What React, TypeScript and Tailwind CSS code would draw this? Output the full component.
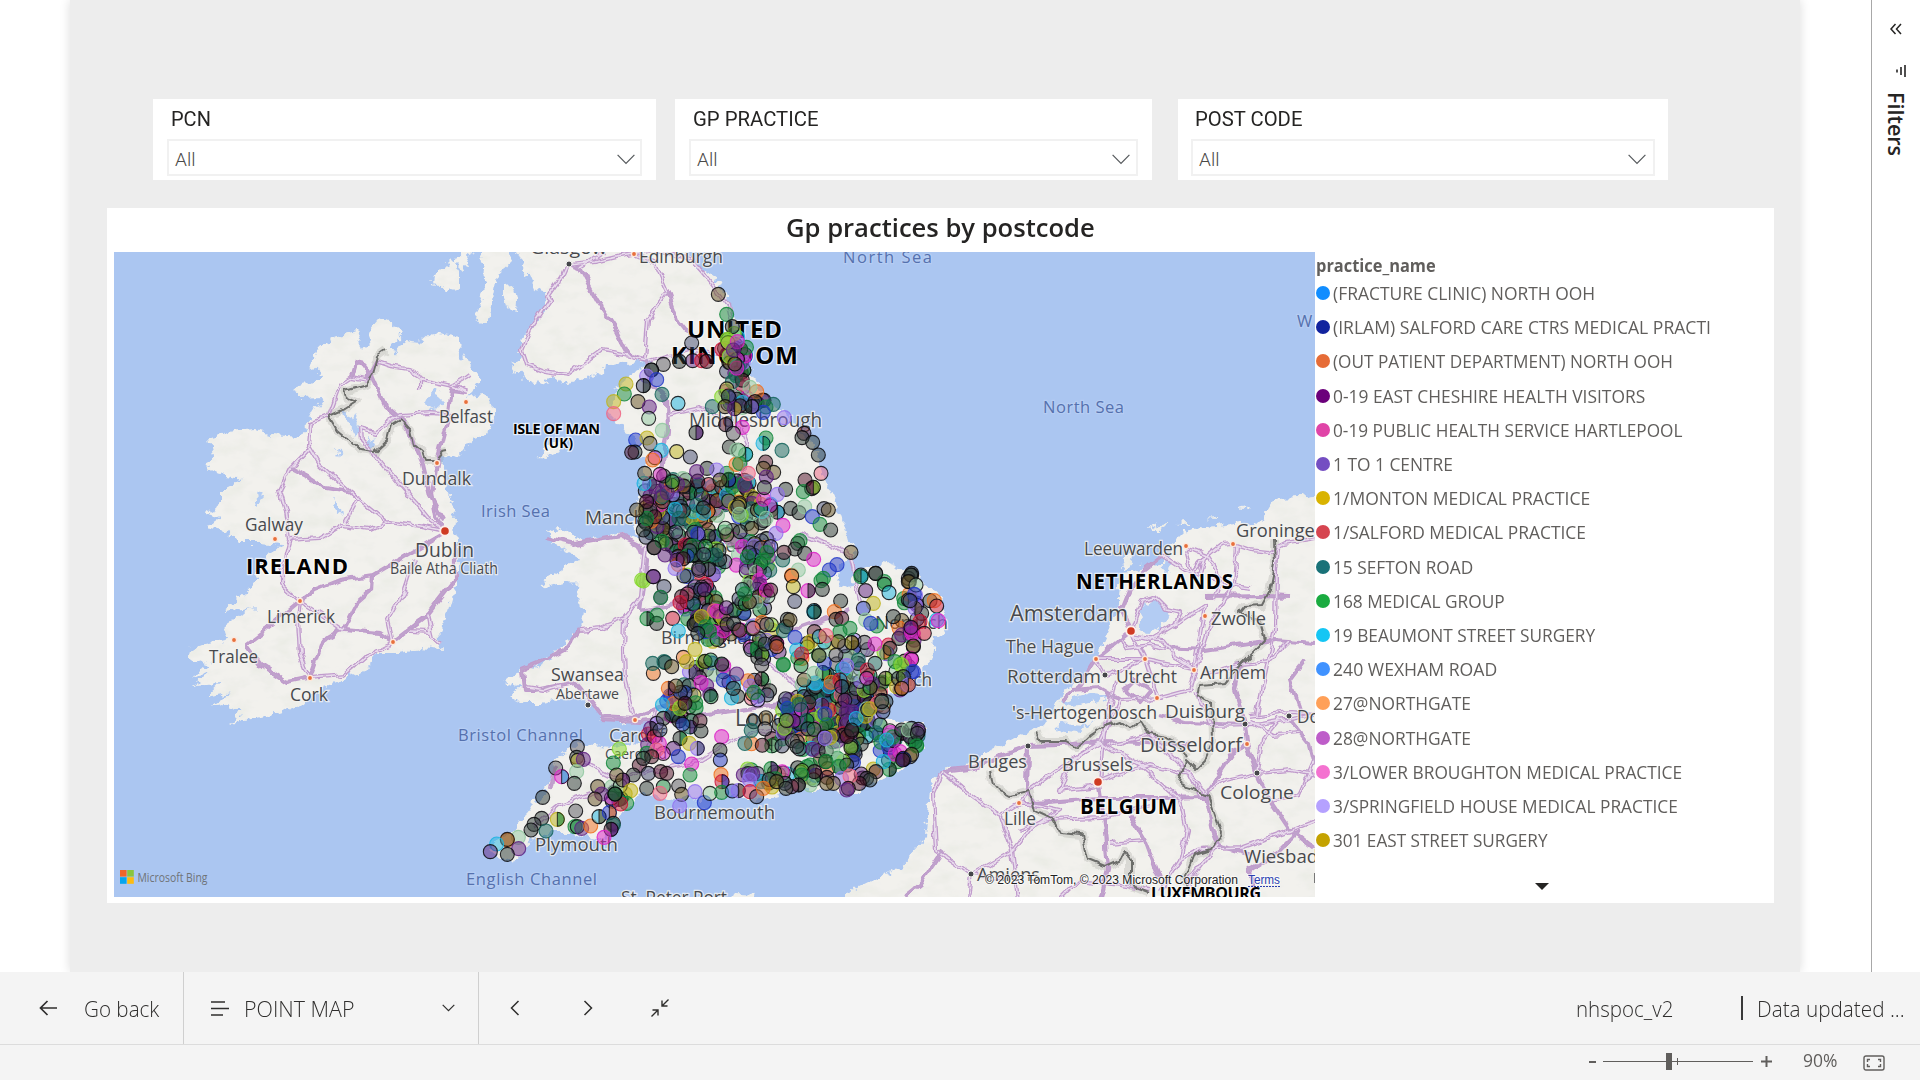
import React, { useLayoutEffect, useRef, useState } from "react";

const UI = "font-['Open_Sans','Noto_Sans',sans-serif]";

/* Text squeezed or stretched horizontally to a given width. */
function Fit({ w, className = "", children }: { w: number; className?: string; children: string }) {
  const ref = useRef<HTMLSpanElement>(null);
  const [scale, setScale] = useState(1);
  useLayoutEffect(() => {
    if (ref.current) setScale(w / ref.current.offsetWidth);
  }, [w, children]);
  return (
    <span className="block shrink-0" style={{ width: w }}>
      <span ref={ref} className={`inline-block origin-left whitespace-nowrap ${className}`} style={{ transform: `scaleX(${scale})` }}>
        {children}
      </span>
    </span>
  );
}

const legend: [string, string, number][] = [
  ["#118DFF", "(FRACTURE CLINIC) NORTH OOH", 262],
  ["#12239E", "(IRLAM) SALFORD CARE CTRS MEDICAL PRACTI", 378],
  ["#E66C37", "(OUT PATIENT DEPARTMENT) NORTH OOH", 340],
  ["#6B007B", "0-19 EAST CHESHIRE HEALTH VISITORS", 312],
  ["#E044A7", "0-19 PUBLIC HEALTH SERVICE HARTLEPOOL", 349],
  ["#744EC2", "1 TO 1 CENTRE", 120],
  ["#D9B300", "1/MONTON MEDICAL PRACTICE", 257],
  ["#D64550", "1/SALFORD MEDICAL PRACTICE", 253],
  ["#197278", "15 SEFTON ROAD", 140],
  ["#1AAB40", "168 MEDICAL GROUP", 172],
  ["#15C6F4", "19 BEAUMONT STREET SURGERY", 262],
  ["#4092FF", "240 WEXHAM ROAD", 164],
  ["#FFA058", "27@NORTHGATE", 138],
  ["#BE5DC9", "28@NORTHGATE", 138],
  ["#F472D0", "3/LOWER BROUGHTON MEDICAL PRACTICE", 349],
  ["#B5A1FF", "3/SPRINGFIELD HOUSE MEDICAL PRACTICE", 345],
  ["#C4A200", "301 EAST STREET SURGERY", 215],
];

const land: string[] = [
  // Ireland
  "378,318 388,322 403,332 393,343 387,350 397,353 405,340 420,342 430,333 458,337 460,350 472,368 480,380 472,392 465,397 483,393 493,403 495,417 488,435 473,440 463,453 453,458 443,457 442,467 446,482 447,490 455,510 453,527 457,540 458,570 458,582 450,610 438,633 443,650 420,648 397,653 377,653 363,670 343,680 323,688 297,707 277,713 257,718 228,723 243,712 225,705 210,707 233,692 207,697 220,683 193,685 210,673 192,677 210,665 188,657 190,648 227,640 223,627 240,613 257,608 222,612 243,595 257,580 253,577 270,553 283,545 260,543 237,543 223,530 205,527 220,517 205,512 223,503 223,488 243,478 217,473 203,465 213,457 210,437 227,432 257,430 273,435 300,437 307,423 313,413 323,397 297,398 292,388 310,383 323,375 310,365 320,347 333,338 357,330 363,350 370,340 368,330",
  // Great Britain
  "512,240 521,262 532,289 545,293 547,308 532,325 522,343 518,360 511,362 516,370 525,380 540,384 557,375 563,384 580,380 600,373 610,365 647,360 650,364 633,373 623,380 613,397 609,411 623,430 633,435 640,450 647,463 640,483 637,503 633,527 640,540 620,533 597,540 580,543 572,533 557,527 547,532 557,546 572,553 577,560 560,570 540,585 550,587 567,582 578,583 580,597 583,610 580,630 560,650 533,667 517,673 507,678 520,687 510,695 523,703 540,703 567,697 587,700 600,717 627,723 640,722 650,717 640,743 610,747 577,743 553,763 550,787 533,803 513,830 500,837 490,848 497,858 513,863 520,853 537,837 550,833 573,833 583,837 600,840 610,833 630,803 643,793 660,798 673,800 687,797 700,800 733,797 760,800 787,792 800,790 833,790 850,795 870,783 900,770 910,764 922,745 926,723 900,722 875,716 880,700 905,690 932,660 935,637 947,630 940,597 920,580 913,570 885,562 860,572 850,585 838,588 840,565 857,550 847,533 833,497 823,477 817,450 800,430 783,413 760,390 747,360 740,330 730,307 717,280 700,268 690,257 680,240",
  // Isle of Man
  "537,457 549,445 560,436 564,442 557,453 545,458",
  // Argyll, Kintyre and the isles
  "486,240 500,268 488,325 475,321 483,292 486,270",
  "452,258 433,277 432,283 440,284 447,294 460,285 460,270",
  "463,240 456,262 464,270 474,250",
  "502,286 513,285 517,300 516,310 507,308 502,296",
  "478,240 482,262 494,278 512,262 506,240",
  "510,678 503,683 512,686",
  // Continent
  "1330,493 1300,497 1277,498 1265,517 1262,525 1247,522 1210,527 1183,533 1163,553 1163,565 1148,566 1132,572 1120,573 1117,613 1097,657 1083,680 1060,695 1057,706 1043,727 1017,737 990,752 967,767 943,772 930,783 927,837 900,867 853,890 835,905 1330,905",
  // Frisian islands
  "1120,565 1133,548 1131,562 1124,571",
  "1148,530 1160,524 1170,523 1158,529",
  "1176,522 1190,521 1188,524",
  "1206,518 1220,515 1217,519",
  "1240,507 1248,505 1243,509",
  "726,905 735,893 755,894 753,905",
];

const water = [
  "1141,605 1155,599 1165,606 1168,618 1158,630 1146,634 1140,628 1144,618",
  "1060,702 1090,694 1112,696 1092,702 1066,706",
  "1060,722 1085,724 1097,718 1078,733 1056,730",
  "432,388 440,392 441,408 430,409 425,402",
  "343,411 352,413 361,430 356,437 349,424",
  "366,436 374,442 372,450 366,446",
  "336,447 341,450 338,459",
  "333,497 340,508 341,517 335,510",
  "255,495 263,492 258,508",
  "1166,552 1172,552 1170,572 1164,575",
];

const roads: string[] = [
  // Ireland
  "445,531 436,516 432,495 437,463 443,440 448,420 452,390 467,392",
  "445,531 430,520 405,490 375,455 361,440 360,428 375,432 400,415 430,413 455,415",
  "445,531 425,527 385,520 350,492 320,465 308,445 310,422 329,415 340,385 352,377 366,380",
  "352,377 356,363 364,365 374,380 385,405 402,420 412,440 423,465 430,495 444,520",
  "378,362 390,366 408,369 425,380 452,386 467,392",
  "452,386 466,378 470,375",
  "366,380 372,371 378,360",
  "421,378 421,390",
  "310,448 291,468 280,490 286,510 290,540 282,570 282,585 300,601",
  "291,468 310,478 325,488 350,492",
  "360,496 346,522",
  "290,540 320,538 342,525 370,529 390,520",
  "445,533 410,553 390,565 373,575 340,580 315,590 300,601 265,630 245,645 260,665 287,683 310,678 323,640 343,628 355,605 372,590 373,575",
  "300,601 298,620 300,655 308,675",
  "310,678 345,675 368,655 393,642 388,620 405,590 415,560",
  "343,630 380,633 393,642 428,615 455,580 455,545",
  "300,601 325,617 343,630",
  "410,631 430,632 428,615 433,636 441,643",
  // Scotland and the north
  "569,264 580,268 597,300 617,330 630,355 647,360",
  "567,266 563,275 547,298 550,300 530,330 522,350 527,365 545,372 567,375 600,351 625,355 647,360",
  "570,265 595,262 620,256 634,254 655,263 668,292 648,320 645,358",
  "668,292 678,320 690,335",
  "634,254 650,250 690,258 705,275 728,305 735,340 733,420",
  "580,268 605,252",
  "647,360 650,385 667,400 668,430 662,470 665,500 650,530",
  "668,415 700,408 740,425 748,445 740,480",
  "650,362 690,350 735,355",
  // Wales and the south
  "545,536 575,543 620,535 640,545 646,560 640,610",
  "645,545 640,598 625,620 624,650 625,680 634,715",
  "580,630 600,628 625,618 642,597",
  "580,628 565,650 540,663 523,670 525,690 535,690 575,682 590,700 603,716 634,718 655,710 670,703",
  "526,687 545,690 560,685",
  "655,710 650,740 640,770 615,785 560,805 535,825",
  "555,765 550,790",
  "640,775 700,760 735,738 800,725",
  "620,780 590,765 570,762",
  "600,720 640,722 700,715 780,705",
  "800,535 830,545 850,555 860,600",
  "690,600 740,640 790,680 820,710 870,650",
  "640,610 690,600 760,625 800,628 850,610",
  // Netherlands
  "1186,547 1207,555 1220,545 1233,544 1250,550 1268,552 1285,543 1315,538",
  "1186,550 1192,572 1207,555 1222,577 1214,600",
  "1163,556 1145,570 1130,590 1122,610 1131,631",
  "1163,556 1185,570 1200,575 1205,555",
  "1237,546 1234,585 1212,620 1197,665 1190,690 1160,698 1120,700 1100,742",
  "1205,597 1265,596 1290,597",
  "1278,545 1276,570 1275,630 1262,690 1257,715",
  "1131,631 1142,600 1155,597 1168,610 1180,613 1174,625 1150,640 1131,635",
  "1131,631 1120,640 1096,659 1080,685 1062,700",
  "1131,631 1145,659 1120,670 1105,675 1096,659 1145,659 1194,668",
  "1174,625 1205,605 1195,665",
  "1165,648 1205,650 1250,643 1275,640 1315,643",
  "1145,659 1155,690 1157,698",
  "1116,680 1112,700 1105,725 1100,782",
  "1070,690 1100,688 1120,700",
  "1132,635 1162,640 1174,655 1195,668",
  "1205,675 1240,665 1268,662 1290,640",
  "1125,690 1135,680 1150,690 1140,702 1125,690",
  "1214,577 1225,585 1250,588",
  "1119,640 1128,648 1150,645 1165,648",
  // Belgium, France and the Rhine
  "943,772 975,768 1000,755 1028,746 1060,745 1100,742 1145,743 1190,745",
  "943,772 965,790 978,800 1000,815 1019,803 1030,790 1060,768 1098,742",
  "943,772 933,795 936,850 971,874 1010,878",
  "943,850 920,885 905,897",
  "971,874 968,900",
  "971,874 1015,850 1030,830 1060,810 1030,803 1019,803",
  "1028,746 1027,790 1035,803 1098,798 1160,798 1205,797",
  "1098,782 1115,775 1150,765 1190,775 1205,790",
  "1100,742 1140,765 1180,800 1187,830 1180,860 1160,890",
  "1098,785 1105,830 1108,870 1100,900",
  "1000,815 1012,850 1018,900",
  "1019,830 1050,820 1100,818 1150,805",
  "1130,815 1145,840 1160,880",
  "1110,843 1143,840",
  "1195,690 1210,725 1260,724 1315,715",
  "1240,665 1235,690 1245,724 1247,744 1257,773 1270,800 1290,830 1315,850",
  "1250,717 1290,712 1315,714",
  "1250,722 1275,735 1300,733",
  "1160,715 1185,722 1245,724",
  "1257,773 1225,780 1200,795 1190,775 1150,735 1110,745",
  "1257,773 1290,770 1315,775",
  "1247,744 1235,750 1215,780 1205,795 1212,830 1218,845 1250,855",
  "1270,800 1300,795 1315,760",
  "1257,773 1262,740 1280,718",
  "1300,830 1280,850 1250,870 1255,897",
  "1218,845 1205,860 1190,880 1195,900",
  "1180,860 1200,850 1240,848 1290,830 1315,820",
  "1305,660 1290,680 1300,710",
  "1060,900 1080,880 1120,885 1150,890",
  "1100,742 1070,760 1060,790 1098,785",
  "1290,720 1310,745 1315,765",
];

const borders = [
  "385,351 378,356 373,375 366,385 345,391 347,397 356,401 345,408 329,415 338,430 350,440 360,450 375,452 388,440 392,425 400,420 410,430 413,445 422,452 425,460 437,460 443,453 448,452",
  "1274,540 1275,565 1270,590 1262,605 1245,606 1240,612 1260,622 1265,640 1250,655 1240,665 1225,683 1200,685 1198,695 1212,705 1213,740 1205,760 1195,770 1185,760 1180,785 1195,790 1208,795 1215,815 1222,835 1210,850 1195,855 1185,880 1192,895",
  "1038,732 1042,742 1065,742 1075,748 1090,735 1105,725 1120,720 1130,727 1140,720 1150,735 1165,738 1180,745 1187,757",
  "990,770 993,785 1010,795 1030,790 1035,810 1052,818 1060,833 1082,835 1088,860 1105,867 1120,860 1125,850 1130,860 1130,885 1150,893",
];

type LabelKind = "town" | "sea" | "country";
const labels: [string, number, number, number, number, LabelKind][] = [
  ["Glasgow", 530, 607, 254, 19, "town"],
  ["Edinburgh", 639, 723, 262.5, 18.5, "town"],
  ["North Sea", 843, 932, 263, 16.5, "sea"],
  ["UNITED", 687, 782, 338, 24, "country"],
  ["KINGDOM", 671, 798, 364, 24, "country"],
  ["ISLE OF MAN", 513, 600, 434, 14.5, "country"],
  ["(UK)", 544, 573, 447.5, 13.5, "country"],
  ["Middlesbrough", 689, 822, 427, 19.5, "town"],
  ["Belfast", 439, 493, 423, 18.5, "town"],
  ["Dundalk", 402, 471, 485, 18.5, "town"],
  ["Irish Sea", 481, 550, 516.5, 16.5, "sea"],
  ["Galway", 245, 303, 531, 18.5, "town"],
  ["Dublin", 415, 474, 557, 20.5, "town"],
  ["Baile Atha Cliath", 390, 498, 574, 15.5, "town"],
  ["IRELAND", 246, 348, 574, 22, "country"],
  ["Limerick", 267, 335, 623, 18.5, "town"],
  ["Tralee", 209, 258, 663, 18.5, "town"],
  ["Cork", 290, 328, 701, 18.5, "town"],
  ["Bristol Channel", 458, 583, 740.5, 16.5, "sea"],
  ["English Channel", 466, 597, 885, 16.5, "sea"],
  ["Manchester", 585, 690, 524, 19, "town"],
  ["Sheffield", 705, 777, 552, 18, "town"],
  ["Birmingham", 661, 764, 644, 19, "town"],
  ["Norwich", 875, 948, 629, 18, "town"],
  ["Ipswich", 872, 932, 686, 18, "town"],
  ["London", 735, 812, 726, 23, "town"],
  ["Swansea", 551, 624, 681, 18.5, "town"],
  ["Abertawe", 556, 619, 699, 14.5, "town"],
  ["Cardiff", 609, 665, 742, 18.5, "town"],
  ["Caerdydd", 605, 667, 759, 14.5, "town"],
  ["Bournemouth", 654, 775, 819, 19, "town"],
  ["Plymouth", 535, 618, 851, 19, "town"],
  ["St. Peter Port", 621, 727, 904, 17.5, "town"],
  ["North Sea", 1043, 1124, 412.5, 16.5, "sea"],
  ["W", 1297, 1313, 327, 16.5, "sea"],
  ["Leeuwarden", 1084, 1183, 554.5, 18.5, "town"],
  ["Groningen", 1236, 1326, 537, 18.5, "town"],
  ["NETHERLANDS", 1076, 1233, 589, 20.5, "country"],
  ["Amsterdam", 1010, 1128, 621, 22, "town"],
  ["The Hague", 1006, 1094, 653, 18.5, "town"],
  ["Rotterdam", 1007, 1101, 683, 18.5, "town"],
  ["Utrecht", 1116, 1177, 683, 18.5, "town"],
  ["Arnhem", 1200, 1266, 678.5, 18.5, "town"],
  ["Zwolle", 1211, 1266, 624.5, 18.5, "town"],
  ["'s-Hertogenbosch", 1012, 1157, 718.5, 18.5, "town"],
  ["Duisburg", 1165, 1245, 717.5, 19, "town"],
  ["Düsseldorf", 1140, 1242, 752, 19.5, "town"],
  ["Dortmund", 1297, 1380, 723, 18.5, "town"],
  ["Bruges", 968, 1027, 768, 18.5, "town"],
  ["Brussels", 1062, 1133, 771, 19, "town"],
  ["BELGIUM", 1080, 1177, 813.5, 20.5, "country"],
  ["Lille", 1004, 1036, 825, 18.5, "town"],
  ["Cologne", 1220, 1294, 798.5, 18.5, "town"],
  ["Wiesbaden", 1244, 1340, 862.5, 18.5, "town"],
  ["Amiens", 977, 1040, 880.5, 18.5, "town"],
  ["LUXEMBOURG", 1151, 1261, 899, 16, "country"],
];

const capitals = [[445, 531], [1131, 631], [1098, 782]];
const orangeTowns = [[634, 254], [466, 402], [437, 463], [275, 539], [300, 601], [234, 640], [310, 678], [393, 642], [635, 720], [1186, 546], [1233, 544], [1096, 659], [1145, 659], [1194, 670], [1205, 616], [1157, 698], [1247, 744], [1019, 803]];
const darkTowns = [[569, 264], [588, 705], [1105, 675], [1245, 724], [1289, 716], [1028, 746], [1257, 773], [971, 874]];

const palette: Record<string, string> = {
  k: "#2c3a36", g: "#12873a", l: "#86d82c", p: "#5e2080", m: "#dc20c8", b: "#2238c8", c: "#1ab4e0",
  o: "#f0701e", r: "#d01838", w: "#500e26", y: "#c0b41c", n: "#645020", s: "#424a70", t: "#14645c",
  v: "#9070f0", e: "#90c8a0", i: "#f06482", a: "#585860",
};

/* Hand-placed practices, in thirds of a pixel from (500, 250). */
const north =
  "655,133n 680,193g 697,230k 575,279s 682,268l 712,275m 700,300p 538,334k 578,332p 605,332r 620,334w 490,343a 455,360k 454,360k 440,378v 470,389b 430,407s 378,402y 373,432g 341,455y 341,491i 414,455n 448,471p 486,433t 534,460c 446,505e 487,541e 588,548k 407,570b 441,564y 450,580a 405,606k 395,607w 484,601c 530,605y 571,621s 465,623m 458,630o 637,470t 665,440l 685,438k 675,470n 704,476p 677,524w 727,532m 700,550a 688,591k 716,601e 737,613g 770,425o 765,455k 798,471g 820,463t 790,487b 853,503v 798,564g 789,580c 846,601t 912,550w 906,563k 938,577k 955,615k 963,670i 797,636w 821,667n 790,655n 799,681p 793,713k 857,718k 832,733v 915,690w 935,716w 910,725g 940,712w 872,775k 897,788k 914,770e 937,800b 972,776s 985,780n 960,823g 992,840k 849,826m 893,880k 900,872g 885,897k 914,910k 941,928m 848,930t 852,907w 1053,907n 1011,944b 988,960b 875,976o 895,960e 970,985g 1083,975k 1127,970k 1235,970k 1225,985a 1153,995g 425,990l 460,980p 525,955v 495,915p 462,893k 430,840k 440,805g 440,755w 432,700c 434,670n 410,780n 621,655k 650,660v 590,665p 480,673m 517,695g 708,643o 719,640g 660,690n 710,600e 745,670i 828,850v 812,890v 800,908g 790,930g 750,412e 755,470k";
/* Same units, from (500, 570). */
const south =
  "430,33l 460,20p 492,50s 482,82p 482,82g 441,146g 470,160k 471,135g 518,145r 535,183c 545,80w 540,98r 460,310o 458,280t 495,277k 492,275t 515,290n 550,262o 560,275y 505,355o 528,348n 585,238y 632,270g 665,282k 710,312p 670,330b 785,327w 785,285a 633,380g 700,355k 555,400w 600,452w 603,483k 540,505k 470,460v 445,492r 443,524p 440,550g 418,586w 400,615k 445,610s 440,655k 482,605w 500,610w 520,535p 490,550m 575,582m 570,615g 535,560b 568,520y 592,535v 665,500m 660,540k 661,570b 663,614o 666,635r 536,648a 490,650g 480,670i 545,673n 539,708v 585,665v 613,698b 630,670e 665,667g 697,663b 715,662v 750,665r 770,680s 790,655o 232,530a 230,562k 233,571y 250,568p 167,594a 185,620m 230,605e 223,640k 128,682k 358,537l 340,579g 350,615n 368,630n 392,662y 380,700g 362,702r 293,650n 305,672p 285,687n 345,672g 345,672g 345,672k 227,723a 125,745k 172,748y 102,763k 93,780k 138,783t 225,770g 232,770g 245,775p 272,768o 297,740c 328,728b 340,760k 340,765t 333,778w 312,802m 55,802e 22,810o 22,808n 56,836p 22,853k -10,822c -29,845p 490,445k 452,475p 462,500r 478,520m 470,540i 455,560w 430,565k 480,480s 1083,20g 1127,10k 875,18o 880,50y 884,94s 924,62m 963,32g 967,58k 1022,93k 1120,100y 1090,115b 1097,62p 1153,43g 1167,68c 1235,15k 1228,35n 1247,75v 1225,90s 1250,105p 1180,140k 1130,168g 1097,150e 1112,160b 942,122c 942,126c 942,126t 862,148k 858,170k 850,182t 1003,125o 1008,148k 1025,145w 1020,185g 1050,175g 943,185w 885,202b 1125,222m 1055,218y 1015,215n 932,215y 958,200c 978,197i 830,220w 795,222k 830,230o 890,240c 905,252r 957,257n 1008,255a 1075,270t 1040,287v 1102,300r 1125,280t 1170,235k 1205,195p 1232,175p 1240,230n 1232,265m 1200,283l 1185,275g 1235,305b 1157,325n 1110,353g 1100,325m 1200,360p 1190,350y 1205,355k 1220,345b 1195,325k 1240,190m 850,283g 850,285g 903,287g 912,330n 942,310e 1020,330r 1025,350p 870,150n 1055,480k 1145,395k 1235,475k 1255,485p 1250,525g 1230,500k 1200,545m 1210,565w 1230,560n 1168,598g 1150,575c 1128,605w 1100,625k 1110,630k 1078,640w 1050,618i 1045,655w 1040,660p 1000,640n 980,640n 930,645e 943,605w 905,615g 895,645w 875,650w 855,640s 830,635n 858,655k 1160,510c";
/* Same units, from (900, 570). */
const east = "32,15k 25,35n 48,45e 43,73b 90,92k 103,92o 110,108r 110,150c 115,152m 65,130k 45,115v 30,92s 60,155r 73,190r 35,190m 33,172p 40,228n 35,268m 5,285l 40,305b 10,320k 25,345v 5,355o 5,480k 25,480e 55,478p 52,490k 50,528g 35,553n 12,568b 8,570w";

/* Practice-dense areas: cx, cy, rx, ry, count. */
const areas: number[][] = [
  [735, 355, 14, 22, 30], [733, 385, 11, 24, 16], [752, 404, 14, 7, 9], [735, 402, 15, 10, 8],
  [688, 500, 46, 24, 62], [675, 525, 38, 28, 64], [665, 490, 20, 14, 14], [735, 490, 18, 20, 28],
  [756, 512, 22, 14, 30], [725, 545, 45, 22, 36], [700, 562, 26, 18, 30], [758, 565, 14, 22, 20],
  [700, 605, 18, 22, 48], [725, 625, 32, 18, 38], [755, 595, 17, 16, 26], [760, 640, 24, 20, 22],
  [705, 680, 28, 20, 20], [680, 710, 22, 20, 26], [750, 690, 22, 16, 16], [765, 735, 22, 22, 15],
  [832, 710, 50, 32, 150], [850, 690, 40, 24, 44], [862, 725, 24, 18, 28], [806, 725, 26, 24, 28], [825, 745, 40, 16, 24],
  [765, 776, 26, 12, 24], [835, 770, 40, 12, 24], [835, 655, 42, 18, 20], [893, 748, 18, 15, 10], [905, 735, 17, 11, 10],
  [910, 618, 14, 26, 10], [895, 655, 18, 18, 8], [615, 797, 11, 14, 8], [875, 705, 12, 10, 8],
];

type Pin = { x: number; y: number; c: string; d: string | null; s: string };

function buildPins(): Pin[] {
  let seed = 20231;
  const rnd = () => {
    seed = (seed * 1664525 + 1013904223) % 4294967296;
    return seed / 4294967296;
  };
  const weights = "kkkkkkkknnnnaaasssstttwwwppppggggggglllebbbvvvmmmyyooriccee";
  const pins: Pin[] = [];
  const add = (x: number, y: number, k: string) => {
    const split = rnd() < 0.12;
    const other = weights[Math.floor(rnd() * weights.length)];
    pins.push({ x, y, c: palette[k], d: split ? palette[other] : null, s: "knaws".includes(k) || rnd() < 0.25 ? "#08080c" : palette[k] });
  };
  for (const [cx, cy, rx, ry, n] of areas) {
    for (let i = 0; i < n; i++) {
      const a = rnd() * Math.PI * 2;
      const q = Math.sqrt(rnd());
      add(cx + Math.cos(a) * rx * q, cy + Math.sin(a) * ry * q, weights[Math.floor(rnd() * weights.length)]);
    }
  }
  const place = (list: string, ox: number, oy: number) =>
    list.split(" ").forEach((item) => {
      const m = item.match(/(-?\d+),(-?\d+)(\w)/);
      if (m) add(ox + +m[1] / 3, oy + +m[2] / 3, m[3]);
    });
  place(north, 500, 250);
  place(south, 500, 570);
  place(east, 900, 570);
  return pins;
}

const pins = buildPins();

const labelClass: Record<LabelKind, string> = {
  town: "fill-[#47494d] stroke-[#f4f3f0]/80 font-medium",
  sea: "fill-[#5571ae] stroke-[#b9cff4]/80 font-medium",
  country: "fill-black stroke-white/70 font-bold",
};

function PointMap() {
  return (
    <svg className="block h-[645px] w-[1201px] shrink-0" viewBox="114 252 1201 645">
      <defs>
        <filter id="coast" x="0" y="0" width="100%" height="100%">
          <feTurbulence type="fractalNoise" baseFrequency="0.11" numOctaves="3" seed="4" result="n" />
          <feDisplacementMap in="SourceGraphic" in2="n" scale="13" xChannelSelector="R" yChannelSelector="G" />
        </filter>
        <filter id="wander" x="0" y="0" width="100%" height="100%">
          <feTurbulence type="fractalNoise" baseFrequency="0.07" numOctaves="2" seed="9" result="n" />
          <feDisplacementMap in="SourceGraphic" in2="n" scale="9" xChannelSelector="R" yChannelSelector="G" />
        </filter>
        <filter id="relief" x="0" y="0" width="100%" height="100%">
          <feTurbulence type="fractalNoise" baseFrequency="0.04 0.07" numOctaves="4" seed="12" result="n" />
          <feColorMatrix in="n" type="matrix" values="0 0 0 0 0.82  0 0 0 0 0.83  0 0 0 0 0.78  2.4 0 0 0 -1.12" result="tone" />
          <feComposite in="tone" in2="SourceGraphic" operator="in" result="shade" />
          <feMerge>
            <feMergeNode in="SourceGraphic" />
            <feMergeNode in="shade" />
          </feMerge>
        </filter>
      </defs>
      <rect x="114" y="252" width="1201" height="645" fill="#abc6f1" />
      <g filter="url(#relief)">
        <g filter="url(#coast)" fill="#f2f1ed">
          {land.map((p, i) => <polygon key={i} points={p} />)}
        </g>
      </g>
      <g filter="url(#coast)" fill="#b3ccf3">
        {water.map((p, i) => <polygon key={i} points={p} />)}
      </g>
      <g filter="url(#wander)" fill="none" strokeLinejoin="round">
        {borders.map((p, i) => <polyline key={i} points={p} stroke="#8a8a85" strokeOpacity=".22" strokeWidth="8" />)}
        {roads.map((p, i) => <polyline key={i} points={p} stroke="#c09bcc" strokeWidth="4.2" />)}
        {roads.map((p, i) => <polyline key={i} points={p} stroke={i % 3 ? "#e9dced" : "#bfa3cc"} strokeWidth="1.6" />)}
        {borders.map((p, i) => <polyline key={i} points={p} stroke="#6c6d6b" strokeWidth="2" />)}
      </g>
      {orangeTowns.map(([x, y], i) => <circle key={i} cx={x} cy={y} r="2.6" fill="#e8703c" stroke="#fbe9de" strokeWidth="1.4" />)}
      {darkTowns.map(([x, y], i) => <circle key={i} cx={x} cy={y} r="3" fill="#45464a" stroke="#f3f2ef" strokeWidth="1" />)}
      {capitals.map(([x, y], i) => <circle key={i} cx={x} cy={y} r="4.8" fill="#cf3a22" stroke="#fbeeea" strokeWidth="2" />)}
      <g className={UI}>
        {labels.map(([t, x0, x1, y, size, kind], i) => (
          <text
            key={i}
            x={x0}
            y={y}
            fontSize={size}
            textLength={x1 - x0}
            lengthAdjust={kind === "town" ? "spacingAndGlyphs" : "spacing"}
            strokeWidth="2.4"
            paintOrder="stroke"
            className={labelClass[kind]}
          >
            {t}
          </text>
        ))}
      </g>
      {pins.map((p, i) => (
        <g key={i}>
          <circle cx={p.x} cy={p.y} r="7" fill={p.c} fillOpacity=".5" stroke={p.s} strokeOpacity=".85" strokeWidth="1.1" />
          {p.d && (
            <path d={`M${p.x} ${p.y - 7}a7 7 0 0 1 0 14z`} fill={p.d} fillOpacity=".6" stroke="#08080c" strokeOpacity=".8" strokeWidth="1" />
          )}
        </g>
      ))}
      <rect x="120" y="870" width="6.6" height="6.6" fill="#f1652a" />
      <rect x="127.2" y="870" width="6.6" height="6.6" fill="#8ac53e" />
      <rect x="120" y="877.2" width="6.6" height="6.6" fill="#06a5ee" />
      <rect x="127.2" y="877.2" width="6.6" height="6.6" fill="#fdbb10" />
      <text x="137.5" y="881.5" fontSize="12.5" textLength="70" lengthAdjust="spacingAndGlyphs" fill="#6f7378" className={`${UI} font-medium`}>Microsoft Bing</text>
      <g className="font-['Liberation_Sans',Arial,sans-serif]" fontSize="12" strokeWidth="2" stroke="#ffffff" strokeOpacity=".65" paintOrder="stroke">
        <text x="985" y="884" textLength="253" lengthAdjust="spacingAndGlyphs" fill="#222">© 2023 TomTom, © 2023 Microsoft Corporation</text>
        <text x="1248" y="884" textLength="32" lengthAdjust="spacingAndGlyphs" fill="#2a3fb0">Terms</text>
      </g>
      <path d="M1248 886.5h32" stroke="#2a3fb0" strokeWidth="1" strokeDasharray="2 1" />
      <path d="M1314.500 873v10" stroke="#777" strokeWidth="1" />
    </svg>
  );
}

function Slicer({ title, tw, className, boxClass }: { title: string; tw: number; className: string; boxClass: string }) {
  return (
    <section className={`h-[81px] shrink-0 bg-white pt-[9px] ${className}`}>
      <div className="pl-[4px]">
        <Fit w={tw} className="font-[Roboto,sans-serif] text-[19.500px] leading-6 text-[#252423]">{title}</Fit>
      </div>
      <div className={`mt-[7px] flex h-[37px] items-center justify-between border-2 border-[#f1f1f1] pl-[6px] ${boxClass}`}>
        <div className="pt-[4px]">
          <Fit w={20} className="font-[Roboto,sans-serif] text-[19px] font-light leading-6 text-[#4a4947]">All</Fit>
        </div>
        <svg className="mt-[3px]" width="18" height="11" viewBox="0 0 18 11" fill="none" stroke="#55595c" strokeWidth="1.2">
          <path d="M.6.8 9 9.500 17.400.8" />
        </svg>
      </div>
    </section>
  );
}

export default function App() {
  return (
    <div className={`flex h-[1080px] w-[1920px] flex-col overflow-hidden bg-white text-[#252423] ${UI}`}>
      <div className="flex h-[972px] shrink-0 overflow-hidden">
        <main className="ml-[70px] h-[972px] w-[1730px] shrink-0 bg-[#ededed] pt-[99px] shadow-[0_0_10px_rgba(0,0,0,0.14)]">
          <div className="flex pl-[83px]">
            <Slicer title="PCN" tw={40} className="w-[503px] px-[14px]" boxClass="pr-[5px]" />
            <Slicer title="GP PRACTICE" tw={126} className="ml-[19px] w-[477px] px-[14px]" boxClass="pr-[6px]" />
            <Slicer title="POST CODE" tw={107} className="ml-[26px] w-[490px] px-[13px]" boxClass="pr-[7px]" />
          </div>
          <section className="ml-[37px] mt-[28px] h-[695px] w-[1667px] bg-white">
            <h1 className="flex h-[44px] pl-[679px] pt-[2px]">
              <Fit w={309} className="text-[25px] font-semibold leading-[34px]">Gp practices by postcode</Fit>
            </h1>
            <div className="flex pl-[7px]">
              <PointMap />
              <aside className="flex h-[645px] flex-col pl-[1px] text-[#605e5c]">
                <div className="h-[24px] pt-px">
                  <Fit w={120} className="text-[17.500px] font-bold leading-[25px]">practice_name</Fit>
                </div>
                <ul>
                  {legend.map(([color, name, w]) => (
                    <li key={name} className="flex h-[34.200px] items-center gap-[3px]">
                      <span className="size-[14px] shrink-0 rounded-full" style={{ backgroundColor: color }} />
                      <Fit w={w} className="text-[18.500px] leading-[30px]">{name}</Fit>
                    </li>
                  ))}
                </ul>
                <svg className="ml-[219px] mt-[26px]" width="14" height="7" viewBox="0 0 14 7" fill="#252423"><path d="M0 0h14L7 7z" /></svg>
              </aside>
            </div>
          </section>
        </main>
        <aside className="ml-auto flex h-[972px] w-[49px] shrink-0 flex-col items-center border-l border-[#a8a8a8] bg-white">
          <svg className="mt-[23px]" width="12" height="12" viewBox="0 0 12 12" fill="none" stroke="#252423" strokeWidth="1.500"><path d="M5.500 1 1 6l4.500 5M11 1 6.500 6 11 11" /></svg>
          <svg className="ml-[7px] mt-[30px]" width="13" height="12" viewBox="0 0 13 12" fill="none" stroke="#252423" strokeWidth="1.600"><path d="M12 0v12M8 2v8M4 4.500v3" /></svg>
          <div className="mr-[1px] mt-[15px] h-[66px] w-[26px] [writing-mode:vertical-rl]">
            <span className="text-[21.500px] font-semibold leading-[26px]">Filters</span>
          </div>
        </aside>
      </div>

      <nav className="flex h-[73px] shrink-0 items-center border-b border-[#dcdcdc] bg-[#f4f4f4] text-[22px] leading-[30px] text-[#2f2e2d]">
        <div className="flex h-full w-[184px] items-center border-r border-[#cfcfcf] pl-[39px]">
          <svg width="18" height="16" viewBox="0 0 18 16" fill="none" stroke="currentColor" strokeWidth="1.700"><path d="M18 8H1.500M8.500 1 1.500 8l7 7" /></svg>
          <div className="ml-[27px]"><Fit w={75} className="font-light">Go back</Fit></div>
        </div>
        <div className="flex h-full w-[295px] items-center border-r border-[#cfcfcf] pl-[27px]">
          <svg width="18" height="15" viewBox="0 0 18 15" fill="none" stroke="currentColor" strokeWidth="1.600"><path d="M0 1h14M0 7.500h18M0 14h12" /></svg>
          <div className="ml-[15px]"><Fit w={110} className="font-light">POINT MAP</Fit></div>
          <svg className="ml-[88px]" width="13" height="8" viewBox="0 0 13 8" fill="none" stroke="currentColor" strokeWidth="1.200"><path d="M.7.9 6.500 6.700 12.300.9" /></svg>
        </div>
        <svg className="ml-[31px]" width="10" height="16" viewBox="0 0 10 16" fill="none" stroke="currentColor" strokeWidth="1.500"><path d="M8.500 1 1.500 8l7 7" /></svg>
        <svg className="ml-[63px]" width="10" height="16" viewBox="0 0 10 16" fill="none" stroke="currentColor" strokeWidth="1.500"><path d="m1.500 1 7 7-7 7" /></svg>
        <svg className="ml-[58px]" width="18" height="18" viewBox="0 0 18 18" fill="none" stroke="currentColor" strokeWidth="1.400"><path d="M17.500.5 11 7M11 1.500V7h5.500M.5 17.500 7 11M1.500 11H7v5.500" /></svg>
        <div className="ml-auto flex items-center pr-[15px]">
          <Fit w={97} className="font-light">nhspoc_v2</Fit>
          <span className="ml-[68px] mr-[14px] h-[24px] w-[2px] bg-[#3a3a3a]" />
          <Fit w={148} className="font-light">Data updated ...</Fit>
        </div>
      </nav>

      <footer className="flex h-[35px] shrink-0 items-center justify-end bg-[#f4f4f4] pb-[2px] pr-[35px] text-[#605e5c]">
        <span className="h-[2px] w-[7px] bg-[#605e5c]" />
        <div className="relative ml-[7px] h-[17px] w-[150px]">
          <span className="absolute left-0 top-[8px] h-px w-full bg-[#605e5c]" />
          <span className="absolute left-[63px] top-0 h-[17px] w-[6px] bg-[#605e5c]" />
          <span className="absolute left-[74px] top-[5px] h-[7px] w-px bg-[#605e5c]" />
        </div>
        <svg className="ml-[8px]" width="11" height="11" viewBox="0 0 11 11" stroke="#605e5c" strokeWidth="2"><path d="M5.500 0v11M0 5.500h11" /></svg>
        <div className="-mt-[2px] ml-[31px]"><Fit w={34} className="text-[18px] leading-[24px]">90%</Fit></div>
        <svg className="ml-[26px] mt-[3px]" width="22" height="16" viewBox="0 0 22 16" fill="none" stroke="#605e5c" strokeWidth="1.400">
          <rect x="1" y="1" width="20" height="14" rx="2" />
          <path d="M7 4.500H4.500V7M4.500 9v2.500H7M15 4.500h2.500V7M17.500 9v2.500H15" />
        </svg>
      </footer>
    </div>
  );
}
